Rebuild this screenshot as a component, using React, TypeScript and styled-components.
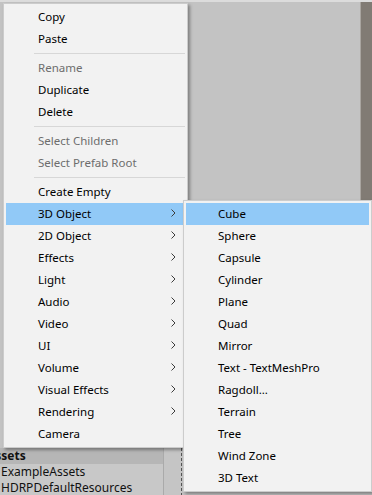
import React from "react";
import styled, { createGlobalStyle } from "styled-components";

const Global = createGlobalStyle`
  html, body { margin: 0; padding: 0; width: 372px; height: 495px; overflow: hidden; background: #c2c2c2; }
  #root { width: 372px; height: 495px; }
`;

const Editor = styled.div`
  position: relative;
  width: 372px;
  height: 495px;
  display: grid;
  grid-template-rows: 2px 446px 1fr;
  font-family: "Noto Sans", "Open Sans", sans-serif;
  overflow: hidden;
`;

const TopStrip = styled.div`
  background: #dcdcdc;
`;

const Workspace = styled.div`
  display: grid;
  grid-template-columns: 1fr 12px;
`;

const Hierarchy = styled.div`
  background: #c3c3c3;
`;

const SceneEdge = styled.div`
  background: #817b74;
  border-left: 1px solid #a9a5a0;
`;

const Project = styled.div`
  display: grid;
  grid-template-columns: 163px 19px 1fr;
  background: #c4c4c4;
`;

const Tree = styled.div`
  display: flex;
  flex-direction: column;
  background: #c8c8c8;
  overflow: hidden;
`;

const TreeHeader = styled.div`
  height: 16px;
  line-height: 16px;
  background: #b6b6b6;
  font-weight: bold;
  font-size: 12px;
  color: #111;
  text-indent: -13px;
  white-space: nowrap;
`;

const TreeItem = styled.div`
  height: 16px;
  line-height: 16px;
  font-size: 12px;
  color: #111;
  padding-left: 1px;
  white-space: nowrap;
`;

const Splitter = styled.div`
  background: #c5c5c5;
  border-left: 1px solid #aaaaaa;
  border-right: 1px dashed #555;
`;

const Files = styled.div`
  background: #c2c2c2;
`;

const Menu = styled.div<{ $left: number; $top: number; $width: number; $z: number }>`
  position: absolute;
  left: ${(p) => p.$left}px;
  top: ${(p) => p.$top}px;
  width: ${(p) => p.$width}px;
  box-sizing: border-box;
  background: #f2f2f2;
  border: 1px solid #cccccc;
  padding: 2px;
  box-shadow: 2px 2px 3px rgba(0, 0, 0, 0.35);
  z-index: ${(p) => p.$z};
  font-family: "Noto Sans", "Open Sans", sans-serif;
  font-size: 11.5px;
`;

const Row = styled.div<{ $disabled?: boolean; $active?: boolean }>`
  height: 22px;
  box-sizing: border-box;
  display: flex;
  align-items: center;
  padding: 0 9px 2px 32px;
  color: ${(p) => (p.$disabled ? "#6d6d6d" : "#000")};
  background: ${(p) => (p.$active ? "#91c9f7" : "transparent")};
  white-space: nowrap;
`;

const Label = styled.span`
  flex: 1;
`;

const Separator = styled.div`
  height: 7px;
  display: flex;
  align-items: center;
  padding-left: 28px;
  &::after {
    content: "";
    flex: 1;
    height: 1px;
    background: #d7d7d7;
  }
`;

const Chevron = () => (
  <svg width="5" height="8" viewBox="0 0 5 8" style={{ display: "block" }}>
    <polyline points="0.5,0.5 4,4 0.5,7.5" fill="none" stroke="#3c3c3c" strokeWidth="1" />
  </svg>
);

type Item = { label: string; disabled?: boolean; active?: boolean; sub?: boolean } | "sep";

const mainItems: Item[] = [
  { label: "Copy" },
  { label: "Paste" },
  "sep",
  { label: "Rename", disabled: true },
  { label: "Duplicate" },
  { label: "Delete" },
  "sep",
  { label: "Select Children", disabled: true },
  { label: "Select Prefab Root", disabled: true },
  "sep",
  { label: "Create Empty" },
  { label: "3D Object", sub: true, active: true },
  { label: "2D Object", sub: true },
  { label: "Effects", sub: true },
  { label: "Light", sub: true },
  { label: "Audio", sub: true },
  { label: "Video", sub: true },
  { label: "UI", sub: true },
  { label: "Volume", sub: true },
  { label: "Visual Effects", sub: true },
  { label: "Rendering", sub: true },
  { label: "Camera" },
];

const subItems: Item[] = [
  { label: "Cube", active: true },
  { label: "Sphere" },
  { label: "Capsule" },
  { label: "Cylinder" },
  { label: "Plane" },
  { label: "Quad" },
  { label: "Mirror" },
  { label: "Text - TextMeshPro" },
  { label: "Ragdoll..." },
  { label: "Terrain" },
  { label: "Tree" },
  { label: "Wind Zone" },
  { label: "3D Text" },
];

const renderItems = (items: Item[]) =>
  items.map((it, i) =>
    it === "sep" ? (
      <Separator key={i} />
    ) : (
      <Row key={i} $disabled={it.disabled} $active={it.active}>
        <Label>{it.label}</Label>
        {it.sub && <Chevron />}
      </Row>
    )
  );

export default function App() {
  return (
    <>
      <Global />
      <Editor>
        <TopStrip />
        <Workspace>
          <Hierarchy />
          <SceneEdge />
        </Workspace>
        <Project>
          <Tree>
            <TreeHeader>Assets</TreeHeader>
            <TreeItem>ExampleAssets</TreeItem>
            <TreeItem>HDRPDefaultResources</TreeItem>
          </Tree>
          <Splitter />
          <Files />
        </Project>
        <Menu $left={3} $top={3} $width={185} $z={1}>
          {renderItems(mainItems)}
        </Menu>
        <Menu $left={183} $top={200} $width={189} $z={2}>
          {renderItems(subItems)}
        </Menu>
      </Editor>
    </>
  );
}
